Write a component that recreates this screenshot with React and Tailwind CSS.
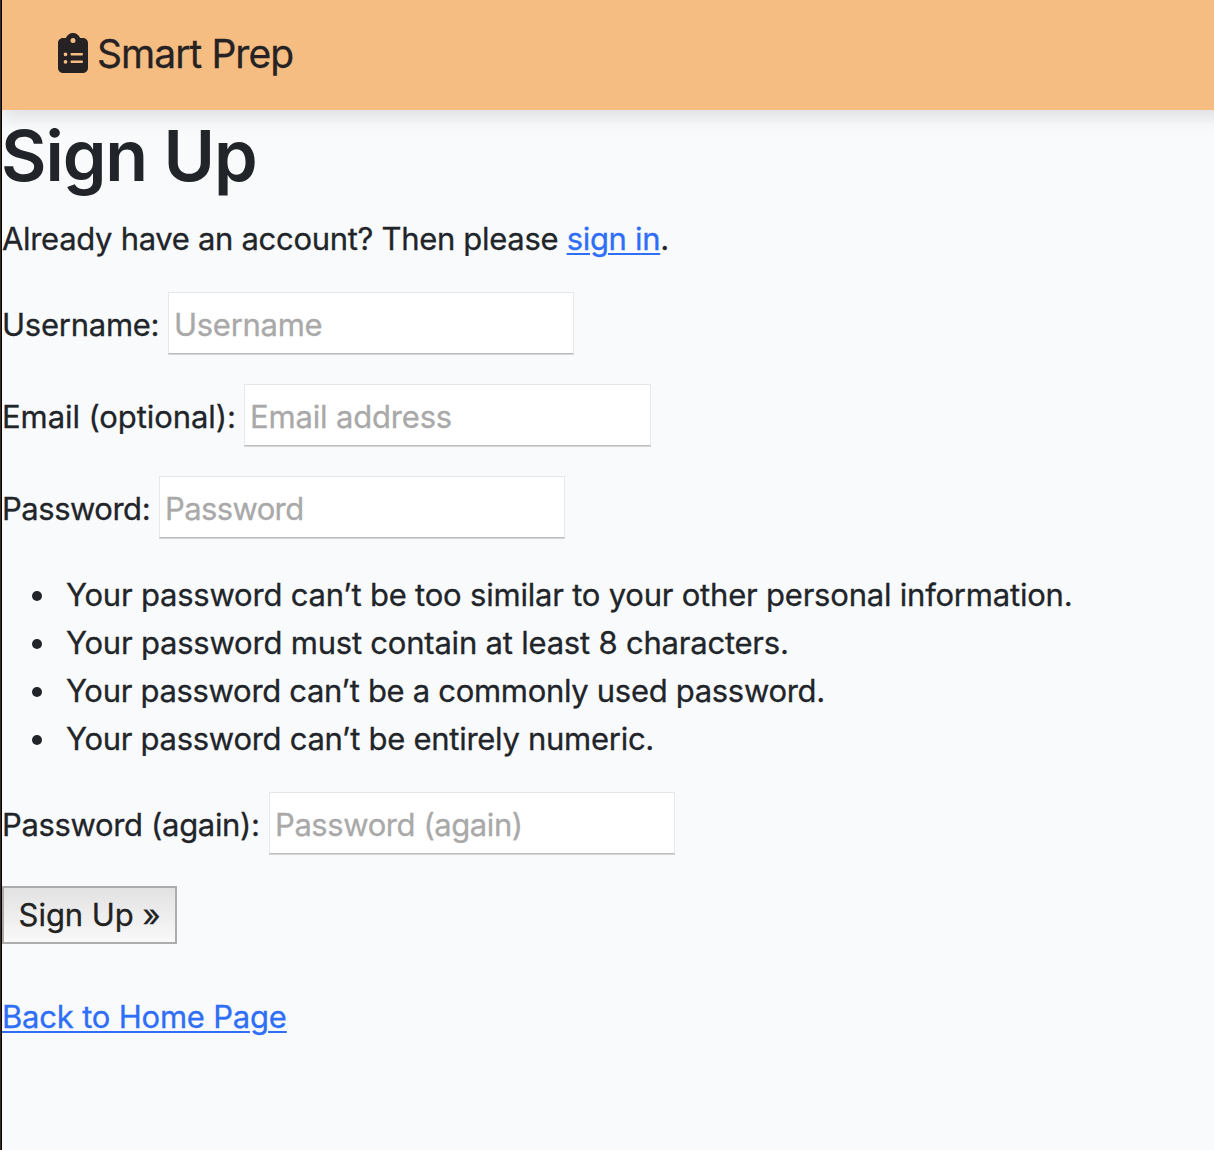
import { FaClipboardList } from "react-icons/fa6";

function Field({ label, placeholder, labelWidth, inputWidth = "w-[406px]", tracking, placeholderTracking }) {
  return (
    <label className="flex h-[62px] items-center">
      <span className={`${labelWidth} ${tracking} shrink-0 pt-[4px] whitespace-nowrap`}>{label}</span>
      <input
        placeholder={placeholder}
        className={`${inputWidth} ${placeholderTracking} h-[62px] border border-[#e6e7e9] border-b-[#bcbcbd] bg-white px-[5px] pt-[2px] shadow-[0_1px_0_#d6d7d8] placeholder:text-[#a9a9a9]`}
      />
    </label>
  );
}

export default function App() {
  return (
    <div className="w-[1214px] border-l border-[#3b2a22]">
      <div className="flex h-[1150px] flex-col overflow-hidden border-l border-black bg-[#f9fafc] font-['Inter',sans-serif] text-[31px] leading-[48px] font-normal tracking-[-0.21px] text-[#212529] [-webkit-text-stroke-width:0.3px]">
        <header className="-mr-8 flex h-[110px] shrink-0 items-center bg-[#f6bd82] pb-[4px] pl-[56px] text-[#262224] shadow-[0_8px_16px_rgba(0,0,0,0.1)]">
          <FaClipboardList className="h-10 w-[30px]" />
          <span className="ml-[9px] pt-[2px] text-[39px] tracking-[-0.95px]">Smart Prep</span>
        </header>
        <h1 className="mt-[3px] -ml-px h-[86px] text-[70px] leading-[86px] font-semibold tracking-[-1.1px] [-webkit-text-stroke-width:0px]">Sign Up</h1>
        <p className="mt-[16px] tracking-[-0.31px]">
          Already have an account? Then please <a className="text-[#2f6ef6] underline decoration-2 underline-offset-[3px]">sign in</a>.
        </p>
        <div className="mt-[29px] flex flex-col gap-[30px]">
          <Field label="Username:" placeholder="Username" labelWidth="w-[166px]" tracking="tracking-[-0.25px]" placeholderTracking="tracking-[-0.28px]" />
          <Field label="Email (optional):" placeholder="Email address" labelWidth="w-[242px]" inputWidth="w-[407px]" tracking="tracking-[-0.08px]" placeholderTracking="tracking-[-0.17px]" />
          <Field label="Password:" placeholder="Password" labelWidth="w-[157px]" tracking="tracking-[-0.48px]" placeholderTracking="tracking-[-0.62px]" />
        </div>
        <ul className="mt-[33px] list-disc pl-[57px]">
          <li className="pl-[7px]">Your password can’t be too similar to your other personal information.</li>
          <li className="pl-[7px]">Your password must contain at least 8 characters.</li>
          <li className="pl-[7px] tracking-[-0.31px]">Your password can’t be a commonly used password.</li>
          <li className="pl-[7px] tracking-[-0.28px]">Your password can’t be entirely numeric.</li>
        </ul>
        <div className="mt-[29px]">
          <Field label="Password (again):" placeholder="Password (again)" labelWidth="w-[267px]" tracking="tracking-[-0.34px]" placeholderTracking="tracking-[-0.42px]" />
        </div>
        <button className="mt-[32px] h-[58px] w-[175px] border-2 border-[#adadad] bg-gradient-to-b from-[#e2e2e2] to-[#f9f9f9] tracking-[-0.05px] whitespace-nowrap text-[#222222]">Sign Up »</button>
        <a className="mt-[49px] self-start tracking-[-0.2px] text-[#2f6ef6] underline decoration-2 underline-offset-[3px]">Back to Home Page</a>
      </div>
    </div>
  );
}
